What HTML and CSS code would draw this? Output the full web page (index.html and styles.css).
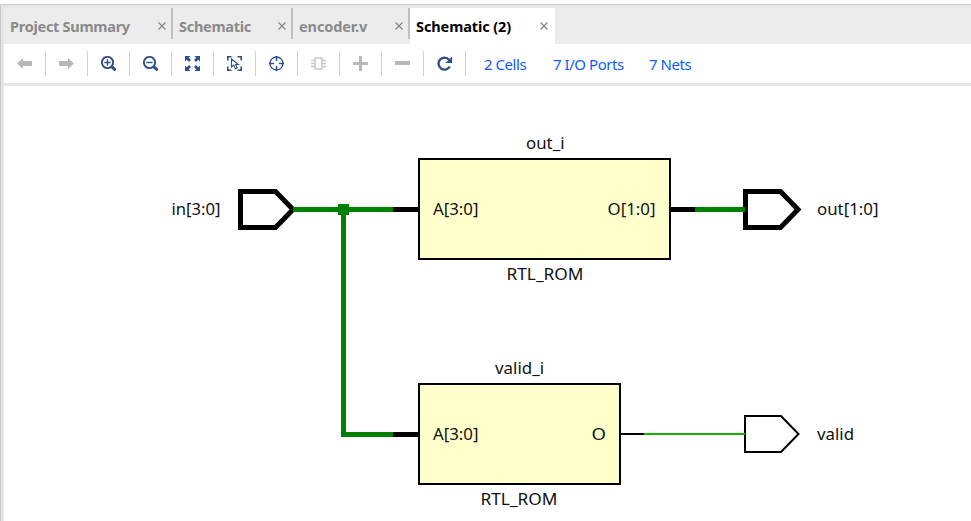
FILE: index.html
```html
<!DOCTYPE html>
<html lang="en">
<head>
<meta charset="utf-8">
<title>Schematic (2)</title>
<link rel="stylesheet" href="styles.css">
</head>
<body>
<div class="window">
  <nav class="tabs">
    <div class="tab tab-summary"><span class="label">Project Summary</span><svg class="close" viewBox="0 0 8 8"><path d="M.5.5l7 7M7.5.5l-7 7"/></svg></div>
    <div class="tab tab-schematic"><span class="label">Schematic</span><svg class="close" viewBox="0 0 8 8"><path d="M.5.5l7 7M7.5.5l-7 7"/></svg></div>
    <div class="tab tab-encoder"><span class="label">encoder.v</span><svg class="close" viewBox="0 0 8 8"><path d="M.5.5l7 7M7.5.5l-7 7"/></svg></div>
    <div class="tab active"><span class="label">Schematic (2)</span><svg class="close" viewBox="0 0 8 8"><path d="M.5.5l7 7M7.5.5l-7 7"/></svg></div>
  </nav>
  <div class="toolbar">
    <div class="tool off"><svg viewBox="0.5 0.5 15 15"><path class="fill" d="M.5 8L6.500 2.500V5.500H15.500V10.500H6.500V13.500Z"/></svg></div>
    <div class="tool off"><svg viewBox="0.5 0.5 15 15"><path class="fill" d="M15.500 8L9.500 2.500V5.500H.5V10.500H9.500V13.500Z"/></svg></div>
    <div class="tool"><svg viewBox="0.5 0.5 15 15"><circle cx="7" cy="7" r="5.600" stroke-width="1.900"/><path d="M3.800 7h6.400M7 3.800v6.400" stroke-width="1.400"/><path d="M11.200 11.200l4 3.600" stroke-width="3"/></svg></div>
    <div class="tool"><svg viewBox="0.5 0.5 15 15"><circle cx="7" cy="7" r="5.600" stroke-width="1.900"/><path d="M3.800 7h6.400" stroke-width="1.400"/><path d="M11.200 11.200l4 3.600" stroke-width="3"/></svg></div>
    <div class="tool"><svg viewBox="0.5 0.5 15 15"><path class="fill" d="M.5.5h5.500L4.200 2.300 6.500 4.600 4.600 6.500 2.300 4.200.5 6zM15.500.5H10l1.800 1.800-2.300 2.300 1.900 1.900 2.300-2.300L15.500 6zM.5 15.500H6l-1.800-1.800 2.300-2.300-1.900-1.900-2.300 2.300L.5 10zM15.500 15.500H10l1.800-1.800-2.300-2.300 1.900-1.900 2.300 2.300 1.800-1.800z"/></svg></div>
    <div class="tool"><svg viewBox="0.5 0.5 15 15"><path d="M1.300 5V1.300H5M11 1.300h3.700V5M1.300 11v3.700H5M11 14.700h3.700V11" stroke-width="1.600"/><path d="M5 3.500v8l2.200-1.900 1.600 3.700 1.900-.9-1.600-3.400h2.700z" stroke-width="1.100"/></svg></div>
    <div class="tool"><svg viewBox="0.5 0.5 15 15"><circle cx="8" cy="8" r="6.500" stroke-width="1.300"/><path d="M8 .5v5M8 10.500v5M.5 8h5M10.500 8h5" stroke-width="1.500"/></svg></div>
    <div class="tool faint"><svg viewBox="0.5 0.5 15 15"><path d="M4.500 2.500h7v11h-7z" stroke-width="1.500"/><path d="M.5 5H4M.5 8H4M.5 11H4M12 5h3.500M12 8h3.500M12 11h3.500" stroke-width="1.300"/></svg></div>
    <div class="tool off"><svg viewBox="0.5 0.5 15 15"><path d="M.5 8h15M8 .5v15" stroke-width="3"/></svg></div>
    <div class="tool off"><svg viewBox="0.5 0.5 15 15"><path d="M.5 7.500h15" stroke-width="4"/></svg></div>
    <div class="tool"><svg viewBox="0.5 0.5 15 15"><path d="M12.600 4.200A6 6 0 1 0 13.300 11" stroke-width="2.400"/><path class="fill" d="M15.500 1v6.500H9z"/></svg></div>
    <div class="links"><a class="cells">2 Cells</a><a class="ports">7 I/O Ports</a><a class="nets">7 Nets</a></div>
  </div>
  <svg class="canvas" viewBox="4 86 967 435" width="967" height="435">
    <g class="ports" stroke-width="5">
      <path d="M240.500 191.500H275.500L293 209.500 275.500 227.500H240.500Z"/>
      <path d="M745.500 191.500H780.500L798 209.500 780.500 227.500H745.500Z"/>
      <path d="M745 416H781L798.500 434 781 452H745Z" stroke-width="2"/>
    </g>
    <g class="pins" stroke-width="5">
      <path d="M393 209.500H419M670 209.500H695M393 434.500H419"/>
      <path d="M620 434H644" stroke-width="2"/>
    </g>
    <g class="nets" stroke-width="5">
      <path d="M293 209.500H393M343.500 209.500V434.500H393M695 209.500H745"/>
      <path class="scalar" d="M644 434H745" stroke-width="2"/>
    </g>
    <rect class="junction" x="338" y="204" width="11" height="11"/>
    <rect class="cell" x="419" y="159" width="251" height="100"/>
    <rect class="cell" x="419" y="384" width="201" height="100"/>
    <g class="names">
      <text x="171.500" y="215" textLength="49" lengthAdjust="spacingAndGlyphs">in[3:0]</text>
      <text x="526" y="149" textLength="38.500" lengthAdjust="spacingAndGlyphs">out_i</text>
      <text x="433" y="215" textLength="45.500" lengthAdjust="spacingAndGlyphs">A[3:0]</text>
      <text x="607.500" y="215" textLength="48" lengthAdjust="spacingAndGlyphs">O[1:0]</text>
      <text x="506.500" y="280" textLength="77" lengthAdjust="spacingAndGlyphs">RTL_ROM</text>
      <text x="817" y="215" textLength="61.500" lengthAdjust="spacingAndGlyphs">out[1:0]</text>
      <text x="495" y="374" textLength="49" lengthAdjust="spacingAndGlyphs">valid_i</text>
      <text x="433" y="440" textLength="45.500" lengthAdjust="spacingAndGlyphs">A[3:0]</text>
      <text x="591.500" y="440" textLength="14.500" lengthAdjust="spacingAndGlyphs">O</text>
      <text x="480.500" y="505" textLength="77" lengthAdjust="spacingAndGlyphs">RTL_ROM</text>
      <text x="817" y="440" textLength="37" lengthAdjust="spacingAndGlyphs">valid</text>
    </g>
  </svg>
</div>
</body>
</html>
```
FILE: styles.css
```css
* { box-sizing: border-box; }
body {
  margin: 0;
  padding-top: 4px;
  height: 521px;
  overflow: hidden;
  background: #fff;
  font-family: "Noto Sans", "Open Sans", sans-serif;
}
.window {
  height: 517px;
  border-top: 1px solid #c8c8c8;
  border-left: 1px solid #c8c8c8;
  background: #e6e6e6;
  padding: 3px 0 0 3px;
}
.tabs {
  display: flex;
  height: 36px;
  background: #ececec;
}
.tab {
  position: relative;
  display: flex;
  align-items: center;
  justify-content: space-between;
  height: 36px;
  padding: 0 7px 0 6px;
  color: #8a8a8a;
  font-size: 14.5px;
  font-weight: 700;
  letter-spacing: -0.27px;
  line-height: 36px;
  white-space: nowrap;
}
.tab:not(.active)::after {
  content: "";
  position: absolute;
  right: 0;
  top: 0;
  width: 2px;
  height: 31px;
  background: #c0c0c0;
}
.tab-summary { width: 169px; }
.tab-schematic { width: 120px; }
.tab-encoder { width: 117px; letter-spacing: -0.1px; }
.active { width: 145px; background: #fff; color: #000; letter-spacing: -0.1px; }
.close { width: 8px; height: 8px; fill: none; stroke: #858585; stroke-width: 1.2; }
.toolbar {
  display: flex;
  align-items: center;
  height: 42px;
  background: #fff;
  border-bottom: 3px solid #e6e6e6;
}
.tool {
  display: flex;
  align-items: center;
  justify-content: center;
  width: 42px;
  height: 25px;
  border-right: 1px solid #d2d2d2;
  color: #2f4f87;
}
.tool svg { width: 15px; height: 15px; fill: none; stroke: currentColor; }
.tool .fill { fill: currentColor; stroke: none; }
.off { color: #b8b8b8; }
.faint { color: #c6c6c6; }
.links {
  display: flex;
  padding: 1px 0 0 18px;
  color: #0f5cf5;
  font-size: 15px;
  letter-spacing: -0.45px;
  line-height: 22px;
  white-space: nowrap;
}
.links .cells { width: 69px; }
.links .ports { width: 96px; }
.canvas { display: block; background: #fff; }
.canvas path { fill: none; }
.canvas .ports { stroke: #000; }
.pins { stroke: #000; }
.canvas .nets { stroke: #008000; }
.canvas .scalar { stroke: #18b000; }
.junction { fill: #008000; }
.cell { fill: #ffffcc; stroke: #000; stroke-width: 2; }
.names { font-size: 17px; fill: #111; }
```
